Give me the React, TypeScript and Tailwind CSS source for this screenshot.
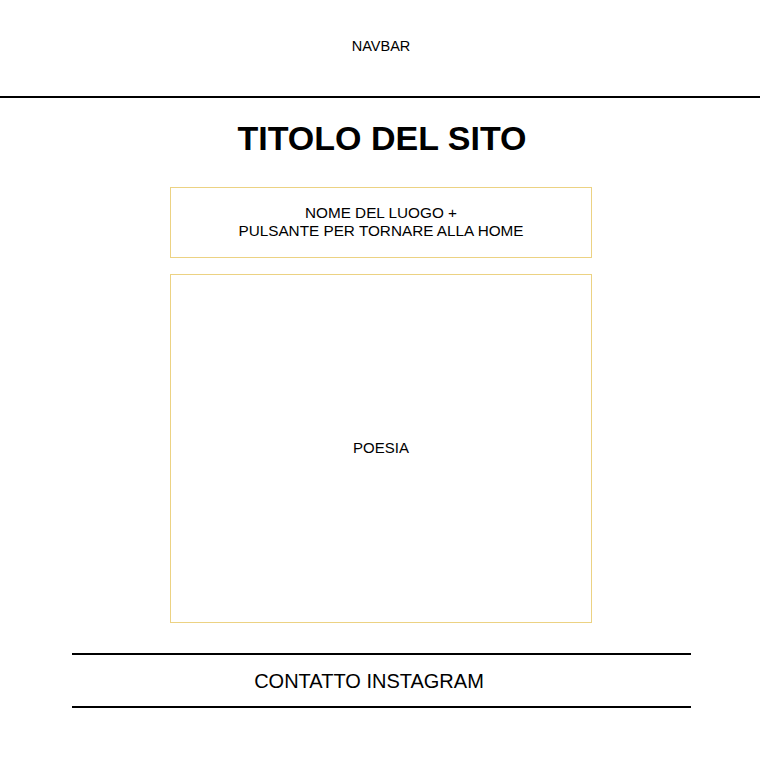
import React from "react";

export default function App() {
  return (
    <div className="min-h-[769px] w-full bg-white text-black flex flex-col items-center" style={{ fontFamily: '"Liberation Sans", Arial, sans-serif' }}>
      <nav className="w-full h-[98px] border-b-2 border-black flex items-center justify-center pb-[2px] pl-[2px]">
        <span className="text-[14.5px]">NAVBAR</span>
      </nav>
      <h1 className="mt-[20px] text-[34px] font-bold leading-[40px] ml-[4px]">TITOLO DEL SITO</h1>
      <div className="mt-[29px] ml-[2px] w-[422px] h-[71px] border border-[#ecd283] flex flex-col items-center justify-center text-[15.3px] leading-[18px] pb-[1px]">
        <span>NOME DEL LUOGO +</span>
        <span>PULSANTE PER TORNARE ALLA HOME</span>
      </div>
      <div className="mt-[16px] ml-[2px] w-[422px] h-[349px] border border-[#ecd283] flex items-center justify-center text-[15px]">
        <span>POESIA</span>
      </div>
      <footer className="mt-[30px] ml-[3px] w-[619px] h-[55px] border-y-2 border-black flex items-center justify-center text-[20px] pr-[25px]">
        <span>CONTATTO INSTAGRAM</span>
      </footer>
    </div>
  );
}
